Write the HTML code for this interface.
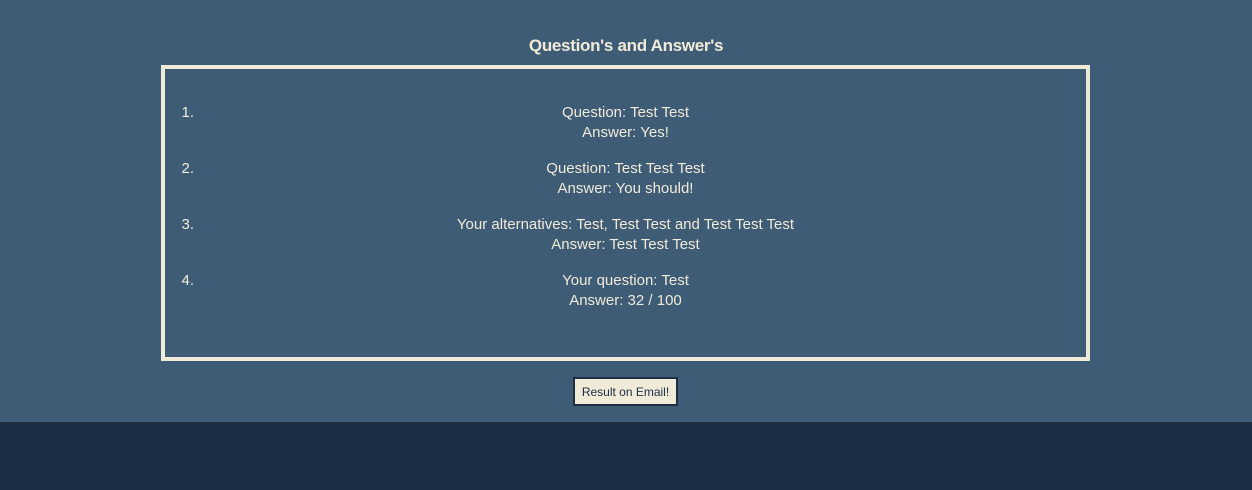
<!DOCTYPE html>
<html><head><style>
html,body{margin:0;padding:0;width:1252px;height:490px;overflow:hidden;background:#3e5c76;font-family:"Liberation Sans",sans-serif;color:#f0ebd8}
h2{position:absolute;top:36px;left:0;width:1252px;text-align:center;margin:0;font-size:17px;font-weight:bold;line-height:20px;letter-spacing:-0.3px}
.box{position:absolute;left:161px;top:65px;width:921px;height:288px;border:4px solid #f0ebd8}
.item{position:absolute;left:0;width:921px;text-align:center;font-size:15px;line-height:20px}
.num{position:absolute;left:0;width:29px;text-align:right}
.btn{position:absolute;left:573px;top:377px;width:101px;height:25px;border:2px solid #1d2d44;background:#f0ebd8;color:#1d2d44;font-size:12px;line-height:26px;text-align:center}
.foot{position:absolute;left:0;top:422px;width:1252px;height:68px;background:#1d2d44}
</style></head><body>
<h2>Question's and Answer's</h2>
<div class="box">
<div class="item" style="top:34px"><span class="num">1.</span>Question: Test Test<br>Answer: Yes!</div>
<div class="item" style="top:90px"><span class="num">2.</span>Question: Test Test Test<br>Answer: You should!</div>
<div class="item" style="top:146px"><span class="num">3.</span>Your alternatives: Test, Test Test and Test Test Test<br>Answer: Test Test Test</div>
<div class="item" style="top:202px"><span class="num">4.</span>Your question: Test<br>Answer: 32 / 100</div>
</div>
<div class="btn">Result on Email!</div>
<div class="foot"></div>
</body></html>
